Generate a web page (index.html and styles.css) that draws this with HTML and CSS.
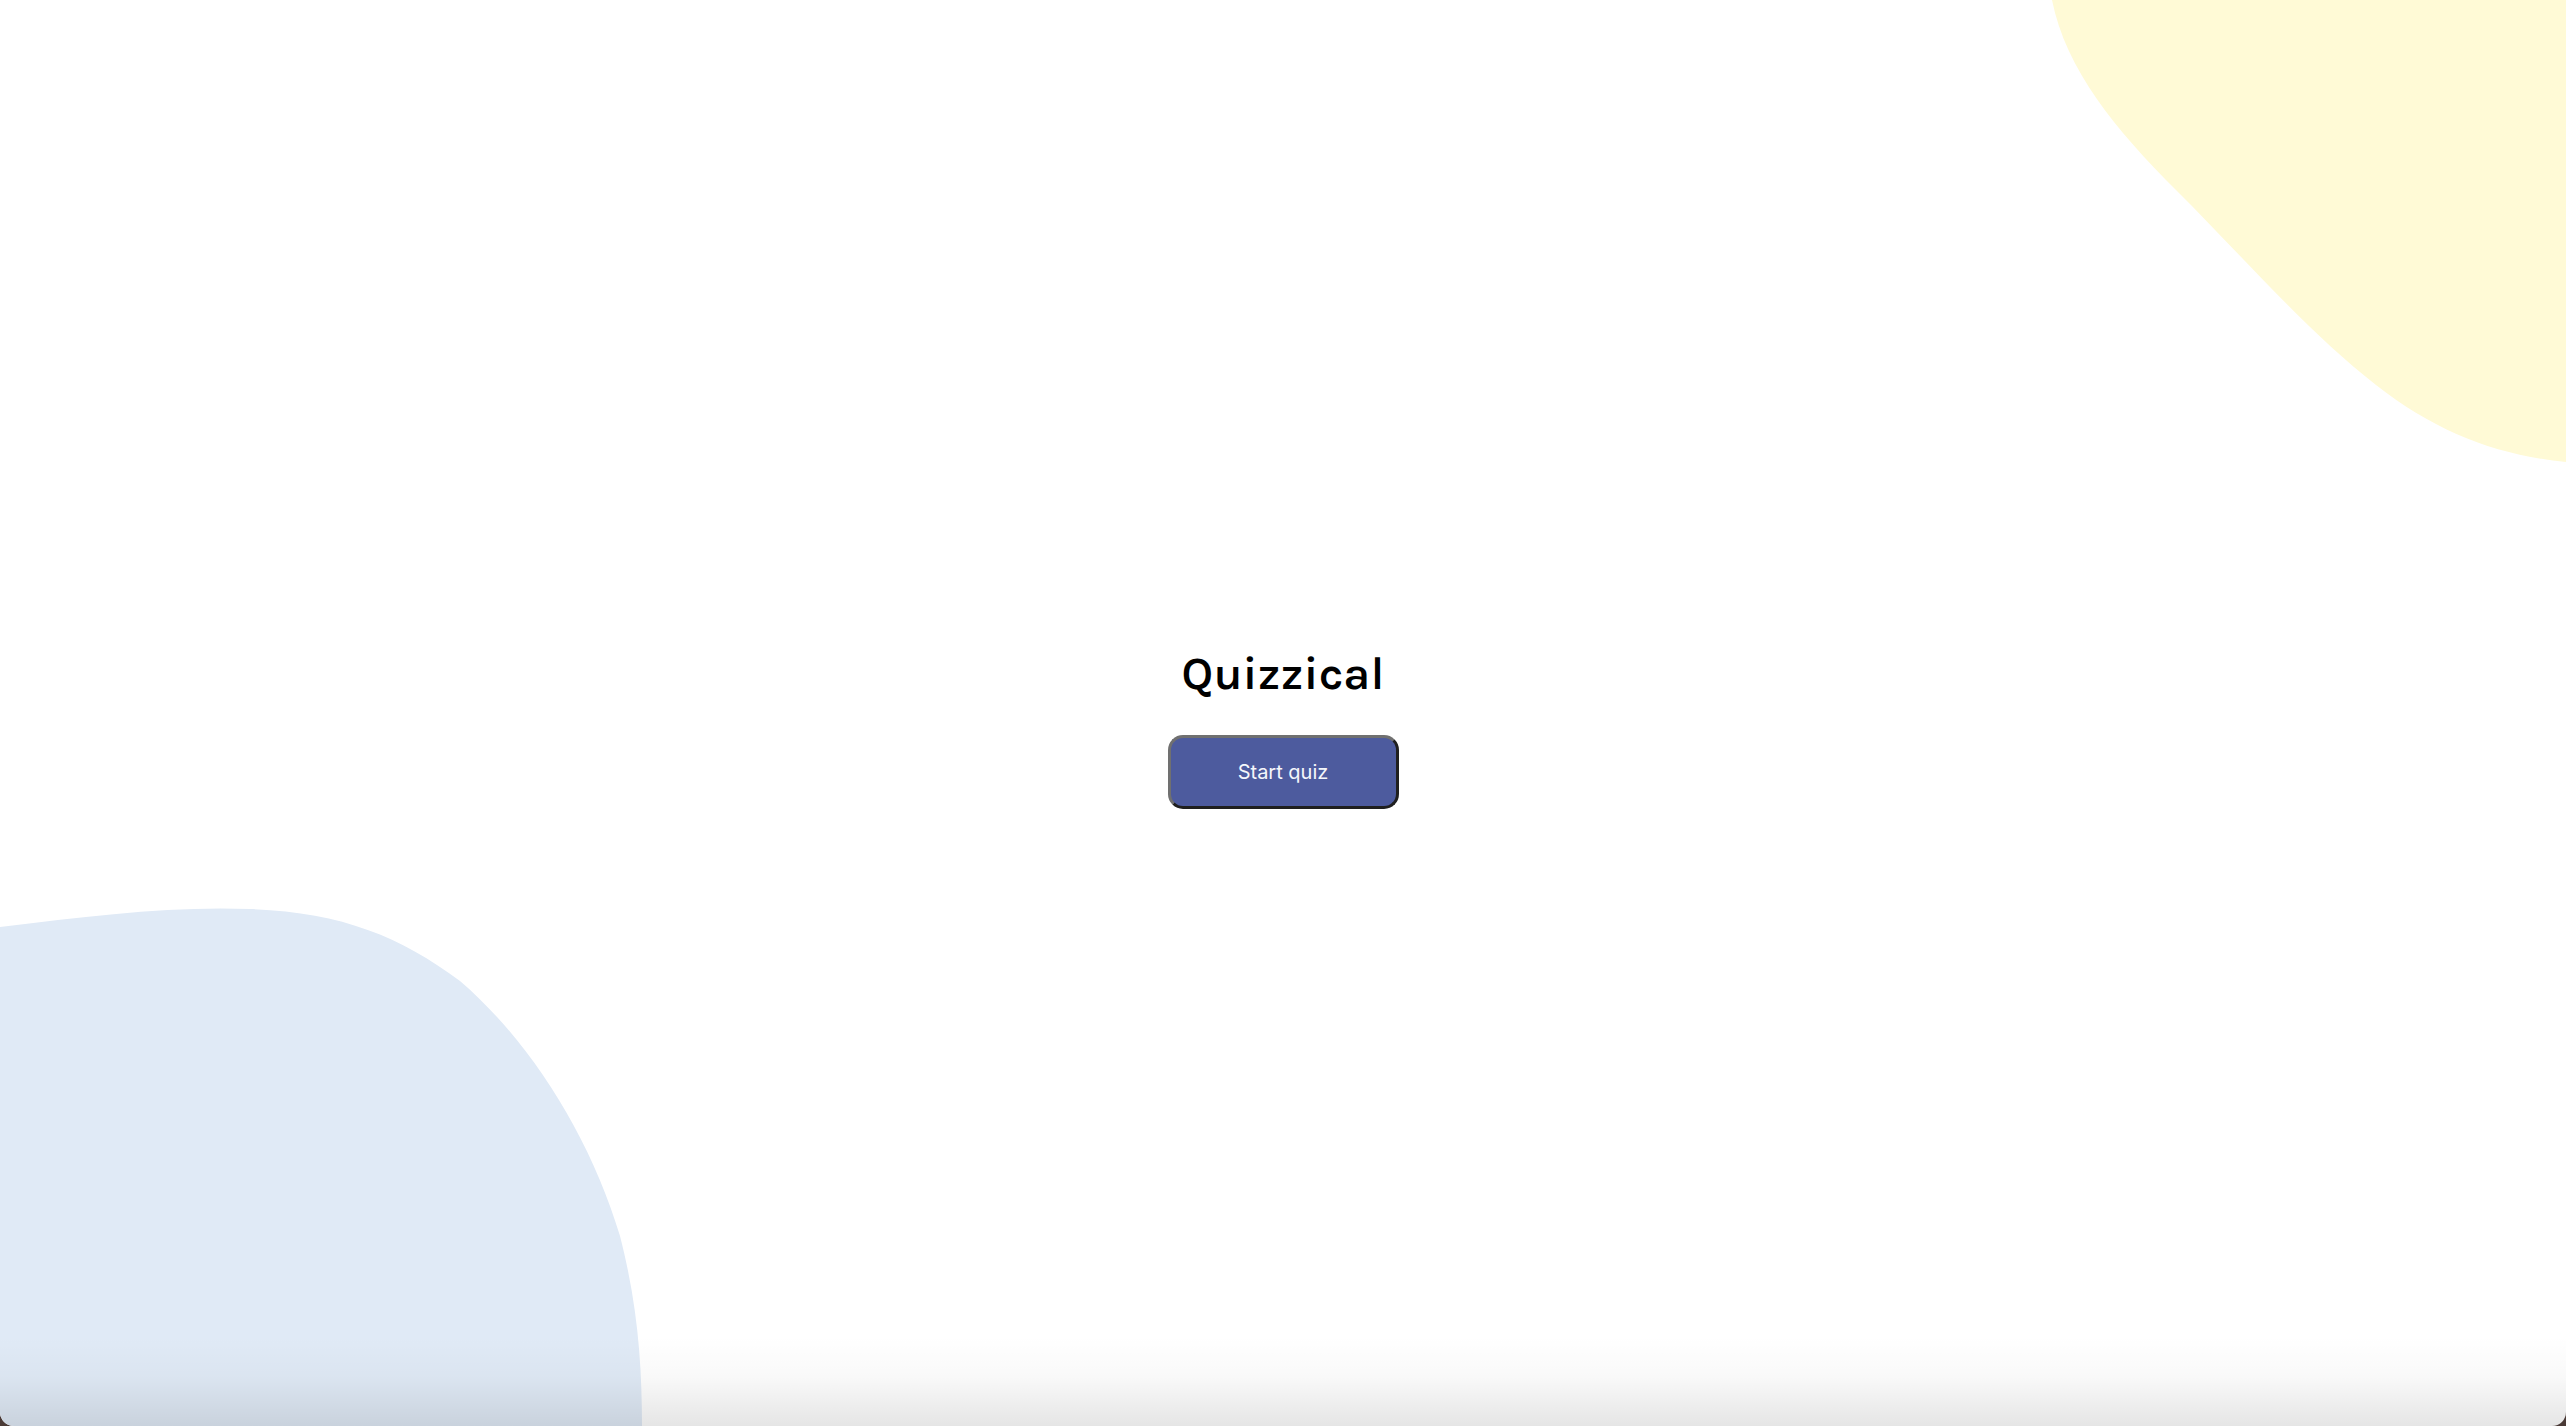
FILE: index.html
```html
<!DOCTYPE html>
<html lang="en">
<head>
<meta charset="utf-8">
<title>Quizzical</title>
<link rel="stylesheet" href="styles.css">
</head>
<body>
<div class="page">
  <svg class="blob blob-yellow" viewBox="0 0 520 470" width="520" height="470" aria-hidden="true">
    <path d="M6 0 C 20 70, 70 130, 130 190 C 200 260, 260 330, 330 385 C 390 432, 450 455, 520 462 L 520 0 Z" fill="#FFFAD6"/>
  </svg>
  <svg class="blob blob-blue" viewBox="0 0 650 520" width="650" height="520" aria-hidden="true">
    <path d="M0 21 C 90 10, 170 0, 250 3 C 340 6, 400 30, 460 75 C 530 135, 590 230, 620 330 C 638 400, 642 460, 642 520 L 0 520 Z" fill="#E0EAF6"/>
  </svg>
  <main class="intro">
    <h1 class="title">Quizzical</h1>
    <button class="start-btn" type="button">Start quiz</button>
  </main>
  <div class="dock-shade"></div>
</div>
</body>
</html>
```
FILE: styles.css
```css
html, body {
  margin: 0;
  padding: 0;
  height: 100%;
}
body {
  background: #4a3a36;
  overflow: hidden;
}
.page {
  position: relative;
  height: 100vh;
  background: #ffffff;
  border-radius: 0 0 14px 14px;
  overflow: hidden;
  display: flex;
  align-items: center;
  justify-content: center;
}
.blob {
  position: absolute;
  display: block;
}
.blob-yellow {
  top: 0;
  right: 0;
}
.blob-blue {
  left: 0;
  bottom: 0;
}
.intro {
  position: relative;
  z-index: 1;
  display: flex;
  flex-direction: column;
  align-items: center;
  gap: 34px;
  margin-top: 30px;
}
.title {
  margin: 0;
  font-family: "Karla", Inter, "Noto Sans", sans-serif;
  font-weight: 600;
  font-size: 47px;
  line-height: 54px;
  color: #000000;
  letter-spacing: 0;
}
.start-btn {
  width: 231px;
  height: 74px;
  background: #4D5B9E;
  color: #F5F7FB;
  font-family: Inter, "Noto Sans", sans-serif;
  font-size: 20px;
  font-weight: 400;
  border-radius: 15px;
  border-width: 3px;
  border-style: solid;
  border-color: #707070 #1f1f1f #1f1f1f #707070;
  cursor: pointer;
  padding: 0;
}
.dock-shade {
  position: absolute;
  left: 0;
  right: 0;
  bottom: 0;
  height: 90px;
  background: linear-gradient(to bottom, rgba(0,0,0,0) 0%, rgba(0,0,0,0.025) 45%, rgba(0,0,0,0.1) 100%);
  pointer-events: none;
  z-index: 2;
}
```
